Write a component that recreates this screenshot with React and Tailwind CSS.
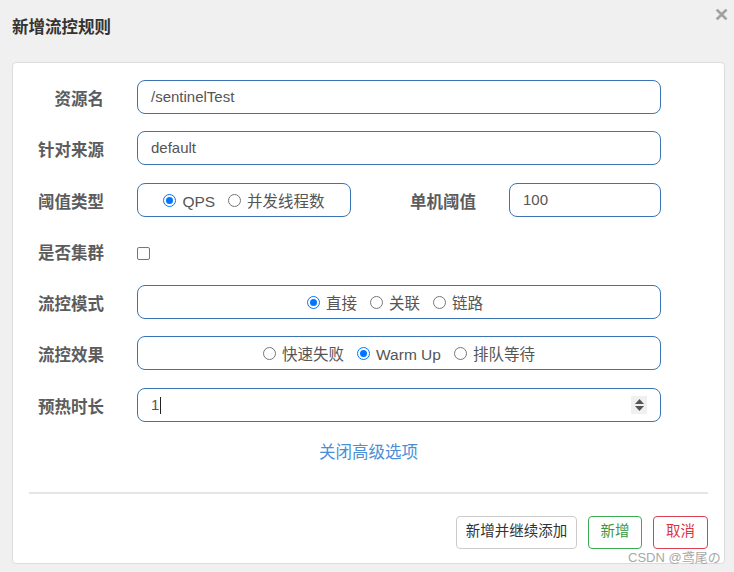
import React from "react";

const cjk = { fontFamily: '"Liberation Sans", "Noto Sans CJK SC", sans-serif' };

const Label = ({ children, className = "" }) => (
  <div
    className={`w-[91px] shrink-0 pt-[5px] text-right text-[16.5px] font-bold text-[#5c5c5c] ${className}`}
  >
    {children}
  </div>
);

const Radio = ({ checked, label }) => (
  <label className="flex items-center gap-[6px]">
    <span
      className={`flex h-[13px] w-[13px] items-center justify-center rounded-full border ${
        checked ? "border-[#0075ff]" : "border-[#767676]"
      } bg-white`}
    >
      {checked && <span className="h-[7px] w-[7px] rounded-full bg-[#0075ff]" />}
    </span>
    <span className="pt-[4px] text-[15.5px] text-[#555]">{label}</span>
  </label>
);

const Box = ({ className = "", children }) => (
  <div
    className={`flex h-[34px] items-center rounded-[8px] border border-[#3b74b5] bg-white ${className}`}
  >
    {children}
  </div>
);

export default function App() {
  return (
    <div className="relative h-[572px] w-[734px] bg-[#f0f0f0]" style={cjk}>
      {/* header */}
      <div className="flex h-[62px] items-start justify-between px-[12px]">
        <h1 className="mt-[15px] text-[16.5px] font-bold text-[#333]">新增流控规则</h1>
        <span className="mt-[6px] -mr-[7px] text-[18px] font-bold leading-none text-[#a0a0a0]">✕</span>
      </div>

      {/* panel */}
      <div className="ml-[12px] h-[502px] w-[713px] rounded-[4px] border border-[#dcdcdc] bg-white pt-[17px]">
        <div className="flex items-center gap-[33px]">
          <Label>资源名</Label>
          <Box className="w-[524px] px-[13px]">
            <span className="text-[15px] text-[#555]">/sentinelTest</span>
          </Box>
        </div>

        <div className="mt-[17px] flex items-center gap-[33px]">
          <Label>针对来源</Label>
          <Box className="w-[524px] px-[13px]">
            <span className="text-[15px] text-[#555]">default</span>
          </Box>
        </div>

        <div className="mt-[18px] flex items-center">
          <Label>阈值类型</Label>
          <Box className="ml-[33px] w-[214px] justify-center gap-[13px]">
            <Radio checked label="QPS" />
            <Radio label="并发线程数" />
          </Box>
          <Label className="w-[125px]">单机阈值</Label>
          <Box className="ml-[33px] w-[152px] px-[13px]">
            <span className="text-[15px] text-[#555]">100</span>
          </Box>
        </div>

        <div className="mt-[17px] flex h-[34px] items-center gap-[33px]">
          <Label>是否集群</Label>
          <span className="mt-[4px] h-[13px] w-[13px] rounded-[2px] border border-[#767676] bg-white" />
        </div>

        <div className="mt-[17px] flex items-center gap-[33px]">
          <Label>流控模式</Label>
          <Box className="w-[524px] justify-center gap-[13px] pr-[8px]">
            <Radio checked label="直接" />
            <Radio label="关联" />
            <Radio label="链路" />
          </Box>
        </div>

        <div className="mt-[17px] flex items-center gap-[33px]">
          <Label>流控效果</Label>
          <Box className="w-[524px] justify-center gap-[13px]">
            <Radio label="快速失败" />
            <Radio checked label="Warm Up" />
            <Radio label="排队等待" />
          </Box>
        </div>

        <div className="mt-[18px] flex items-center gap-[33px]">
          <Label>预热时长</Label>
          <Box className="w-[524px] justify-between pl-[13px] pr-[13px]">
            <span className="flex items-center text-[15px] text-[#555]">
              1<span className="ml-[1px] h-[17px] w-px bg-[#222]" />
            </span>
            <span className="flex h-[18px] w-[16px] flex-col items-center justify-center gap-[2px] bg-[#f0f0f0]">
              <svg width="9" height="5" viewBox="0 0 9 5">
                <path d="M4.5 0 L9 5 L0 5 Z" fill="#555" />
              </svg>
              <svg width="9" height="5" viewBox="0 0 9 5">
                <path d="M0 0 L9 0 L4.5 5 Z" fill="#555" />
              </svg>
            </span>
          </Box>
        </div>

        <div className="mt-[18px] text-center text-[16.5px] text-[#4a8fd6]">关闭高级选项</div>

        <div className="mx-[16px] mt-[27px] h-[2px] bg-[#e5e5e5]" />

        <div className="mr-[16px] mt-[22px] flex justify-end gap-[11px]">
          <button className="h-[33px] w-[121px] rounded-[4px] border border-[#ccc] bg-white text-[14.5px] text-[#333]">
            新增并继续添加
          </button>
          <button className="h-[33px] w-[54px] rounded-[4px] border border-[#3cad55] bg-white text-[14.5px] text-[#3a9a3f]">
            新增
          </button>
          <button className="h-[33px] w-[55px] rounded-[4px] border border-[#dc4055] bg-white text-[14.5px] text-[#dc3545]">
            取消
          </button>
        </div>
      </div>

      <span className="absolute left-[628px] top-[548px] text-[13px] text-[#a8a8a8]">CSDN @鸢尾の</span>
    </div>
  );
}
